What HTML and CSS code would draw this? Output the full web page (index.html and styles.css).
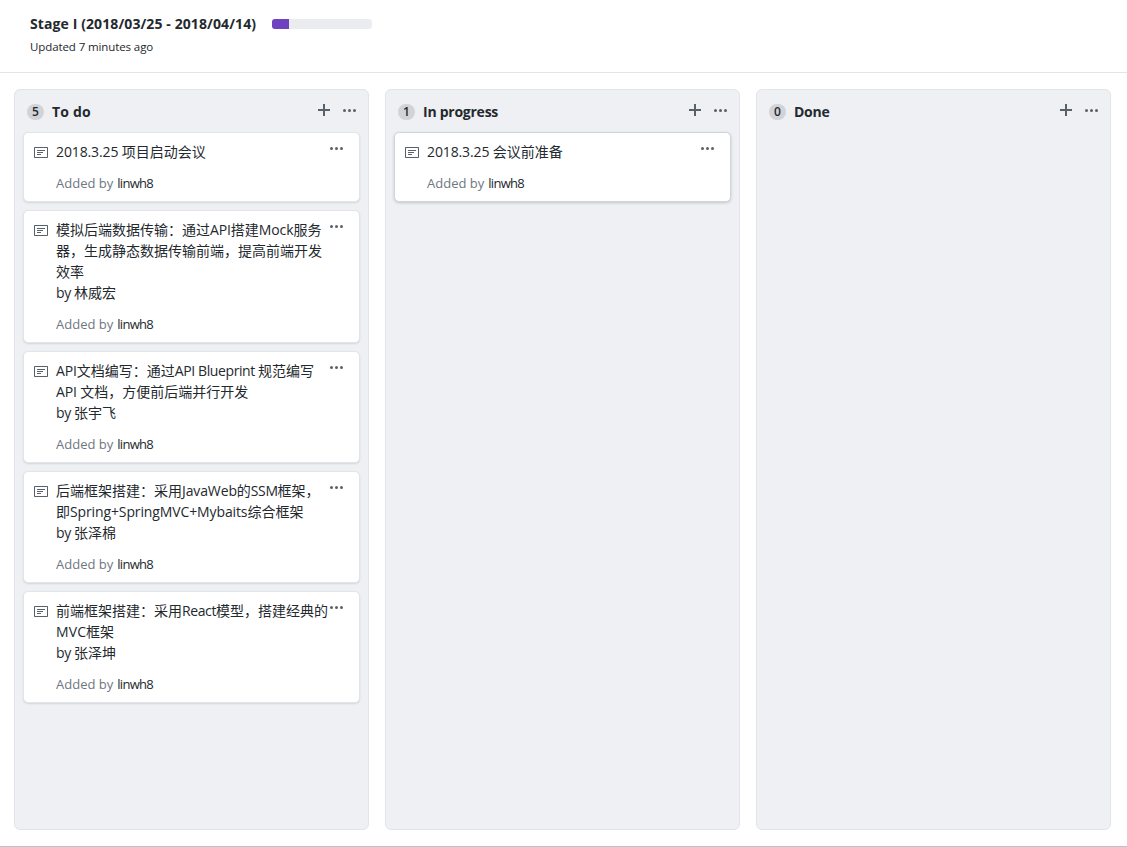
FILE: index.html
```html
<!DOCTYPE html>
<html lang="zh-CN">
<head>
<meta charset="utf-8">
<title>Stage I</title>
<link rel="stylesheet" href="styles.css">
</head>
<body>
<svg class="sprite" aria-hidden="true">
  <symbol id="note" viewBox="0 0 14 16"><path fill-rule="evenodd" d="M3 10h4V9H3v1zm0-2h6V7H3v1zm0-2h8V5H3v1zm10 6H1V3h12v9zM1 2c-.55 0-1 .45-1 1v9c0 .55.45 1 1 1h12c.55 0 1-.45 1-1V3c0-.55-.45-1-1-1H1z"/></symbol>
  <symbol id="dots" viewBox="0 0 13 16"><path fill-rule="evenodd" d="M1.5 9a1.5 1.5 0 1 0 0-3 1.5 1.5 0 0 0 0 3zm5 0a1.5 1.5 0 1 0 0-3 1.5 1.5 0 0 0 0 3zM13 7.500a1.500 1.500 0 1 1-3 0 1.500 1.500 0 0 1 3 0z"/></symbol>
  <symbol id="plus" viewBox="0 0 12 12"><path d="M5 0h2v5h5v2H7v5H5V7H0V5h5z"/></symbol>
</svg>
<header class="project-header">
  <div class="title-row">
    <h1>Stage I (2018/03/25 - 2018/04/14)</h1>
    <div class="progress"><div class="progress-done"></div></div>
  </div>
  <p class="updated">Updated 7 minutes ago</p>
</header>
<main class="board">
  <section class="column">
    <div class="column-head">
      <span class="counter">5</span><h2 class="loose">To do</h2>
      <svg class="plus"><use href="#plus"/></svg><svg class="dots"><use href="#dots"/></svg>
    </div>
    <article class="card">
      <svg class="note"><use href="#note"/></svg>
      <div class="body">
        <p><i>2018.3.25 </i>项目启动会议</p>
        <div class="meta"><span class="added">Added by</span><b>linwh8</b></div>
      </div>
      <svg class="dots"><use href="#dots"/></svg>
    </article>
    <article class="card">
      <svg class="note"><use href="#note"/></svg>
      <div class="body">
        <p>模拟后端数据传输：通过<i>API</i>搭建<i>Mock</i>服务</p>
        <p>器，生成静态数据传输前端，提高前端开发</p>
        <p>效率</p>
        <p><i class="tight">by </i>林威宏</p>
        <div class="meta"><span class="added">Added by</span><b>linwh8</b></div>
      </div>
      <svg class="dots"><use href="#dots"/></svg>
    </article>
    <article class="card">
      <svg class="note"><use href="#note"/></svg>
      <div class="body">
        <p><i>API</i>文档编写：通过<i class="tight">API Blueprint </i>规范编写</p>
        <p><i>API </i>文档，方便前后端并行开发</p>
        <p><i class="tight">by </i>张宇飞</p>
        <div class="meta"><span class="added">Added by</span><b>linwh8</b></div>
      </div>
      <svg class="dots"><use href="#dots"/></svg>
    </article>
    <article class="card">
      <svg class="note"><use href="#note"/></svg>
      <div class="body">
        <p>后端框架搭建：采用<i>JavaWeb</i>的<i class="tight">SSM</i>框架，</p>
        <p>即<i>Spring+SpringMVC+Mybaits</i>综合框架</p>
        <p><i class="tight">by </i>张泽棉</p>
        <div class="meta"><span class="added">Added by</span><b>linwh8</b></div>
      </div>
      <svg class="dots"><use href="#dots"/></svg>
    </article>
    <article class="card">
      <svg class="note"><use href="#note"/></svg>
      <div class="body">
        <p>前端框架搭建：采用<i class="tight">React</i>模型，搭建经典的</p>
        <p><i class="loose">MVC</i>框架</p>
        <p><i class="tight">by </i>张泽坤</p>
        <div class="meta"><span class="added">Added by</span><b>linwh8</b></div>
      </div>
      <svg class="dots"><use href="#dots"/></svg>
    </article>
  </section>
  <section class="column">
    <div class="column-head">
      <span class="counter">1</span><h2>In progress</h2>
      <svg class="plus"><use href="#plus"/></svg><svg class="dots"><use href="#dots"/></svg>
    </div>
    <article class="card raised">
      <svg class="note"><use href="#note"/></svg>
      <div class="body">
        <p><i>2018.3.25 </i>会议前准备</p>
        <div class="meta"><span class="added">Added by</span><b>linwh8</b></div>
      </div>
      <svg class="dots"><use href="#dots"/></svg>
    </article>
  </section>
  <section class="column">
    <div class="column-head">
      <span class="counter">0</span><h2>Done</h2>
      <svg class="plus"><use href="#plus"/></svg><svg class="dots"><use href="#dots"/></svg>
    </div>
  </section>
</main>
</body>
</html>
```
FILE: styles.css
```css
* { box-sizing: border-box; }
body {
  margin: 0;
  height: 847px;
  display: flex;
  flex-direction: column;
  overflow: hidden;
  background: #fff;
  border-bottom: 1px solid #bfc0c2;
  color: #24292e;
  font: 13px/21px "Open Sans", "Noto Sans CJK SC", sans-serif;
}
h1, h2, p { margin: 0; }
svg { display: block; flex: none; fill: #586069; }
.sprite { position: absolute; width: 0; height: 0; }
.project-header {
  height: 73px;
  padding: 14px 30px 0;
  border-bottom: 1px solid #e1e4e8;
}
.title-row { display: flex; align-items: center; gap: 16px; height: 20px; }
h1 { width: 226px; font-size: 14px; line-height: 20px; font-weight: 700; letter-spacing: .1px; white-space: nowrap; }
.progress { width: 100px; height: 10px; border-radius: 3px; overflow: hidden; background: #eaecef; }
.progress-done { width: 17px; height: 10px; background: #6f42c1; }
.updated { margin-top: 4px; font-size: 11.500px; line-height: 18px; letter-spacing: -.1px; }
.board { flex: 1; display: flex; gap: 16px; padding: 16px 16px 16px 14px; }
.column {
  width: 355px;
  padding: 0 8px;
  display: flex;
  flex-direction: column;
  gap: 8px;
  background: #eff0f4;
  border: 1px solid #e1e4e8;
  border-radius: 6px;
}
.column-head { height: 34px; padding: 9px 3px 0 4px; display: flex; align-items: center; }
.column-head h2 { flex: 1; margin-left: 8px; font-size: 14px; line-height: 20px; font-weight: 700; letter-spacing: -.25px; }
.column-head h2.loose { letter-spacing: .2px; }
.counter {
  width: 17px;
  height: 16px;
  margin-top: 1px;
  border-radius: 8px;
  background: #d1d3d6;
  font-size: 12px;
  line-height: 16px;
  font-weight: 600;
  text-align: center;
}
.plus { width: 12px; height: 12px; margin: -4px 13px 0 0; }
.dots { width: 13px; height: 16px; }
.column-head .dots { margin: -1px 1px 0 0; }
.card {
  display: flex;
  padding: 9px 16px 7px 10px;
  background: #fff;
  border: 1px solid #e1e4e8;
  border-radius: 5px;
  box-shadow: 0 1px 2px rgba(27, 31, 35, .12);
}
.raised { border-color: #d1d5da; box-shadow: 0 1px 3px rgba(27, 31, 35, .2); }
.note { width: 14px; height: 16px; margin: 3px 8px 0 0; }
.body { flex: 1; min-width: 0; margin-top: -1px; font-size: 14px; }
.body p { height: 21px; white-space: nowrap; }
.body i { font-style: normal; letter-spacing: -.12px; }
.body i.tight { letter-spacing: -.4px; }
.body i.loose { letter-spacing: .1px; }
.meta { margin: 11px 0 1px; height: 20px; display: flex; gap: 4px; font-size: 13px; line-height: 20px; }
.added { color: #6f7780; }
.meta b { font-weight: 400; letter-spacing: -.7px; }
.card > .dots { margin-top: -1px; }
```
